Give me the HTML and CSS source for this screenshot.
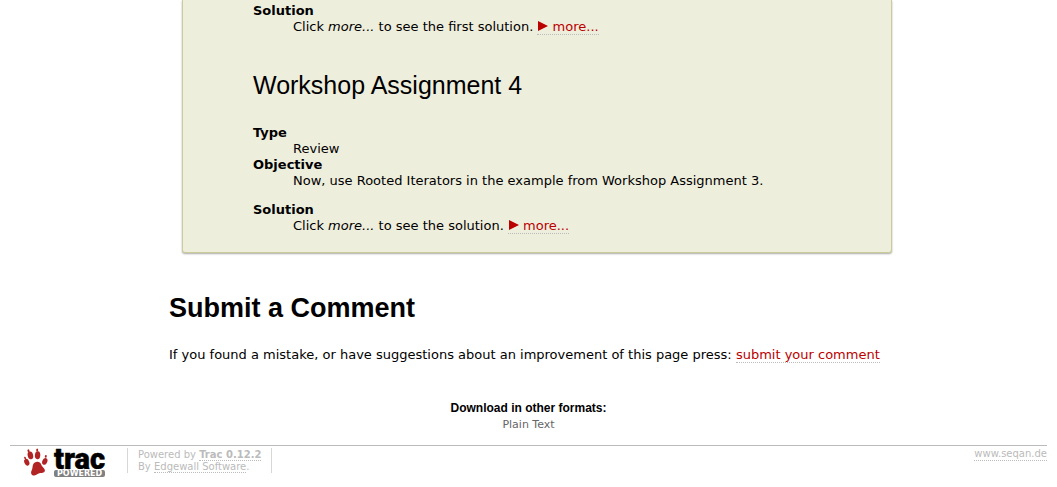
FILE: index.html
```html
<!DOCTYPE html>
<html lang="en">
<head>
<meta charset="utf-8">
<title>Workshop Assignments</title>
<link rel="stylesheet" href="styles.css">
</head>
<body>
<main class="wiki">
  <section class="panel">
    <dl class="terms">
      <dt>Solution</dt>
      <dd>Click <em>more...</em> to see the first solution. <a class="link" href="#more"><svg class="arrow" viewBox="0 0 11 10" aria-hidden="true"><path d="M1 0L11 5L1 10Z"/></svg> more...</a></dd>
    </dl>
    <h2 class="subtitle">Workshop Assignment 4</h2>
    <dl class="terms">
      <dt>Type</dt>
      <dd>Review</dd>
      <dt>Objective</dt>
      <dd>Now, use Rooted Iterators in the example from Workshop Assignment 3.</dd>
      <dt class="spaced">Solution</dt>
      <dd>Click <em>more...</em> to see the solution. <a class="link" href="#more"><svg class="arrow" viewBox="0 0 11 10" aria-hidden="true"><path d="M1 0L11 5L1 10Z"/></svg> more...</a></dd>
    </dl>
  </section>
  <h1 class="title">Submit a Comment</h1>
  <p class="note">If you found a mistake, or have suggestions about an improvement of this page press: <a class="link" href="#comment">submit your comment</a></p>
</main>
<section class="formats">
  <h3 class="formats-title">Download in other formats:</h3>
  <a class="format" href="#text">Plain Text</a>
</section>
<footer class="footer">
  <a class="logo" href="#trac" aria-label="Trac Powered">
    <svg width="82" height="30" viewBox="0 0 82 30">
      <g fill="#b22424">
        <ellipse cx="6.4" cy="7.4" rx="2.7" ry="3.9" transform="rotate(-14 6.4 7.4)"/>
        <ellipse cx="4.5" cy="2.8" rx="1" ry="1.5" transform="rotate(-20 4.5 2.8)"/>
        <ellipse cx="13.6" cy="7.2" rx="2.7" ry="4" transform="rotate(4 13.6 7.2)"/>
        <ellipse cx="13.2" cy="2" rx="1" ry="1.6"/>
        <ellipse cx="2.8" cy="14.2" rx="2.4" ry="3.5" transform="rotate(-24 2.8 14.2)"/>
        <ellipse cx="1.1" cy="10" rx=".9" ry="1.3" transform="rotate(-24 1.1 10)"/>
        <ellipse cx="20.8" cy="13.4" rx="2.5" ry="3.5" transform="rotate(22 20.8 13.4)"/>
        <ellipse cx="21.8" cy="8.4" rx="1" ry="1.4" transform="rotate(12 21.8 8.4)"/>
        <path d="M12.2 14C15 13.2 16.8 15 17.5 17.2C18.3 19.2 20.8 20.2 20.9 22.2C21 24.8 18.3 25 16.3 25C13.7 25.1 12.7 27.4 10.3 27.6C7.5 27.7 6.5 25.2 7.4 23C8 21.4 8.5 20.5 8.6 18.5C8.8 16.2 10 14.5 12.2 14Z"/>
      </g>
      <text class="logo-name" x="30" y="21">trac</text>
      <rect x="30" y="22" width="51" height="7" rx="2" fill="#808080"/>
      <text class="logo-tag" x="33" y="28">POWERED</text>
    </svg>
  </a>
  <p class="powered">Powered by <a class="quiet" href="#about"><strong>Trac 0.12.2</strong></a><br>By <a class="quiet" href="#edgewall">Edgewall Software</a>.</p>
  <a class="quiet site" href="#seqan">www.seqan.de</a>
</footer>
</body>
</html>
```
FILE: styles.css
```css
body {
  margin: 0 10px;
  background: #fff;
  color: #000;
  font: 13px/16px Verdana, "DejaVu Sans", sans-serif;
}
.wiki {
  padding: 0 142px 0 159px;
}
.panel {
  margin: 0 13px;
  padding: 3px 70px 18px;
  border: 1px solid #cc9;
  border-top: 0;
  border-radius: 0 0 3px 3px;
  background: #eed;
  box-shadow: 0 1px 2px #aaa;
}
.terms {
  margin: 0;
}
.terms dt {
  font-weight: bold;
}
.terms dd {
  margin: 0 0 0 40px;
}
.terms .spaced {
  margin-top: 13px;
}
.subtitle {
  margin: 35px 0 25px;
  font: 25px/30px Arial, "Liberation Sans", sans-serif;
}
.title {
  margin: 39px 0 23px;
  font: bold 27px/32px Arial, "Liberation Sans", sans-serif;
}
.note {
  margin: 0;
}
.link {
  border-bottom: 1px dotted #bbb;
  color: #b00;
  text-decoration: none;
}
.arrow {
  width: 11px;
  height: 10px;
  fill: #b00;
}
.formats {
  margin: 37px 0 12px;
  text-align: center;
  font-size: 11px;
  line-height: 17px;
}
.formats-title {
  margin: 0;
  font: bold 12px/16px Arial, "Liberation Sans", sans-serif;
}
.format {
  color: #666;
  text-decoration: none;
}
.footer {
  display: flex;
  align-items: flex-start;
  padding: 2px 0 8px;
  border-top: 1px solid #bbb;
  color: #bbb;
  font-size: 10px;
  line-height: 12px;
}
.logo {
  margin-left: 14px;
}
.logo svg {
  display: block;
  overflow: visible;
}
.logo-name {
  stroke: #000;
  stroke-width: 0.5;
  font: 900 29px Roboto, sans-serif;
}
.logo-tag {
  fill: #fff;
  font: bold 8px "DejaVu Sans", sans-serif;
}
.powered {
  margin: 0 0 0 21px;
  padding: 1px 10px 0;
  border: solid #d7d7d7;
  border-width: 0 1px;
}
.quiet {
  border-bottom: 1px dotted #bbb;
  color: #bbb;
  text-decoration: none;
}
.site {
  margin-left: auto;
}
```
